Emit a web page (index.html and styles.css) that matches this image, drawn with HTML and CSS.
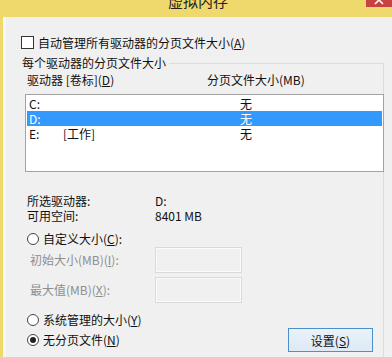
FILE: index.html
```html
<!DOCTYPE html>
<html lang="zh-CN">
<head>
<meta charset="utf-8">
<title>虚拟内存</title>
<link rel="stylesheet" href="styles.css">
</head>
<body>
<div class="titlebar">
  <div class="title">虚拟内存</div>
  <div class="close"><svg class="close-x" width="26" height="7" viewBox="0 0 26 7"><rect x="0" y="0" width="26" height="7" fill="#c7433f"/><path d="M9 -4 L17 4 M17 -4 L9 4" stroke="#fff" stroke-width="1.6" fill="none"/></svg></div>
</div>
<div class="frame">
  <div class="edge"></div>
  <div class="content">
    <label class="check-row"><span class="checkbox"></span><span>自动管理所有驱动器的分页文件大小(<u>A</u>)</span></label>
    <fieldset class="group">
      <legend>每个驱动器的分页文件大小</legend>
      <div class="list-head"><span>驱动器 [卷标](<u>D</u>)</span><span>分页文件大小(MB)</span></div>
      <div class="listbox">
        <div class="row"><span>C:</span><span></span><span>无</span></div>
        <div class="row selected"><span>D:</span><span></span><span>无</span></div>
        <div class="row"><span>E:</span><span>[工作]</span><span>无</span></div>
      </div>
      <div class="info">
        <div class="info-row"><span>所选驱动器:</span><span>D:</span></div>
        <div class="info-row"><span>可用空间:</span><span>8401 MB</span></div>
      </div>
      <div class="radio-row custom"><span class="radio"></span><span>自定义大小(<u>C</u>):</span></div>
      <div class="field-row first"><span class="field-label">初始大小(MB)(<u>I</u>):</span><span class="textbox"></span></div>
      <div class="field-row second"><span class="field-label">最大值(MB)(<u>X</u>):</span><span class="textbox"></span></div>
      <div class="radio-row system"><span class="radio"></span><span>系统管理的大小(<u>Y</u>)</span></div>
      <div class="last-row">
        <div class="radio-row"><span class="radio checked"></span><span>无分页文件(<u>N</u>)</span></div>
        <button class="btn">设置(<u>S</u>)</button>
      </div>
    </fieldset>
  </div>
</div>
</body>
</html>
```
FILE: styles.css
```css
* { box-sizing: border-box; }
html, body {
  margin: 0;
  padding: 0;
}
body {
  width: 392px;
  height: 357px;
  overflow: hidden;
  background: #f0f0f0;
  font-family: "Microsoft YaHei", "Noto Sans CJK SC", sans-serif;
  font-size: 12px;
  line-height: 14px;
  color: #111;
}
u { text-decoration: underline; text-underline-offset: 1px; }

.titlebar {
  display: grid;
  grid-template-columns: 1fr 26px;
  align-items: start;
  height: 17px;
  background: #efd96c;
  overflow: hidden;
}
.title {
  text-align: center;
  padding-left: 30px;
  font-size: 15px;
  line-height: 15px;
  margin-top: -7px;
  color: #222;
}
.close {
  width: 26px;
  height: 7px;
  background: #c7433f;
}
.close-x { display: block; }

.frame {
  display: flex;
  height: 340px;
}
.edge {
  flex: none;
  width: 6px;
  background: #efd96c;
  border-right: 3px solid #f6f6f6;
}
.content {
  flex: 1;
  padding: 0 8px 0 15px;
  display: flex;
  flex-direction: column;
}

.check-row {
  display: flex;
  align-items: center;
  gap: 4px;
  height: 13px;
  margin-top: 19px;
}
.checkbox {
  width: 13px;
  height: 13px;
  border: 1px solid #333;
  background: #fff;
  flex: none;
}

.group {
  margin: 7px 0 0 0;
  border: 1px solid #dcdcdc;
  border-left-color: transparent;
  border-bottom: none;
  padding: 0 0 0 3px;
  min-width: 0;
  flex: 1;
  display: flex;
  flex-direction: column;
}
.group legend {
  padding: 0 3px 0 0;
  margin-left: -3px;
  line-height: 14px;
}

.list-head {
  display: flex;
  height: 14px;
  margin-top: 3px;
  padding-left: 2px;
}
.list-head span:first-child { width: 180px; }

.listbox {
  margin-top: 7px;
  height: 78px;
  border: 1px solid #a3a3a3;
  background: #fff;
  padding: 1px;
  margin-right: -1px;
}
.row {
  display: grid;
  grid-template-columns: 34px 177px 1fr;
  height: 15px;
  line-height: 15px;
  padding-left: 2px;
  color: #111;
}
.row.selected {
  background: #3399ff;
  color: #fff;
}

.info {
  margin-top: 21px;
  display: flex;
  flex-direction: column;
}
.info-row {
  display: grid;
  grid-template-columns: 128px 1fr;
  height: 15px;
  line-height: 15px;
  padding-left: 2px;
}

.radio-row {
  display: flex;
  align-items: center;
  gap: 4px;
  height: 14px;
  padding-left: 2px;
}
.radio {
  width: 12px;
  height: 12px;
  border-radius: 50%;
  border: 1px solid #444;
  background: #fff;
  flex: none;
  display: flex;
  align-items: center;
  justify-content: center;
}
.radio.checked::after {
  content: "";
  width: 6px;
  height: 6px;
  border-radius: 50%;
  background: #222;
}
.custom { margin-top: 9px; }
.system { margin-top: 10px; }

.field-row {
  display: grid;
  grid-template-columns: 130px 87px;
  align-items: center;
  height: 26px;
  color: #8e8e8e;
}
.field-row.first { margin-top: 1px; }
.field-row.second { margin-top: 4px; }
.field-label { padding-left: 5px; }
.textbox {
  height: 26px;
  border: 1px solid #d9d9d9;
  box-shadow: inset 0 0 0 1px #fbfbfb;
  background: #f0f0f0;
}

.last-row {
  display: flex;
  align-items: center;
  justify-content: space-between;
  height: 24px;
  margin-top: 1px;
  padding-right: 10px;
}
.btn {
  width: 85px;
  height: 24px;
  border: 1px solid #4c8fcc;
  background: linear-gradient(#eaf2fa, #dde9f5);
  font-family: inherit;
  font-size: 12px;
  color: #111;
  padding: 0;
}
```
